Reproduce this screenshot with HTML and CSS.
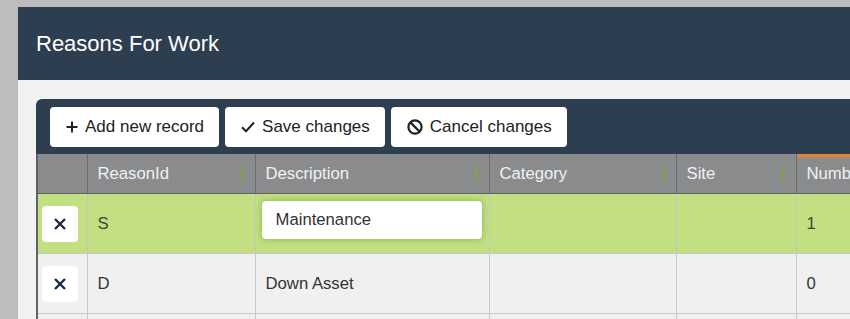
FILE: index.html
```html
<!DOCTYPE html>
<html lang="en">
<head>
  <meta charset="UTF-8" />
  <meta name="viewport" content="width=device-width, initial-scale=1.0"/>
  <title>Reasons For Work</title>
  <link rel="stylesheet" href="styles.css">
</head>
<body>
  <div class="panel">
    <div class="panel-header">Reasons For Work</div>
    <div class="panel-body">
      <div class="grid">
        <div class="toolbar">
          <button class="tool-btn">
            <svg width="12" height="12" viewBox="0 0 12 12"><path d="M6 0.5v11M0.5 6h11" stroke="#222" stroke-width="2" fill="none"/></svg>
            Add new record
          </button>
          <button class="tool-btn">
            <svg width="14" height="12" viewBox="0 0 14 12"><path d="M1 6.2l4 4L13 1.5" stroke="#222" stroke-width="2" fill="none"/></svg>
            Save changes
          </button>
          <button class="tool-btn">
            <svg width="16" height="16" viewBox="0 0 16 16"><circle cx="8" cy="8" r="6.6" stroke="#222" stroke-width="2.2" fill="none"/><path d="M3.4 3.4l9.2 9.2" stroke="#222" stroke-width="2.2"/></svg>
            Cancel changes
          </button>
        </div>
        <table class="data">
          <colgroup>
            <col style="width:50px">
            <col style="width:168px">
            <col style="width:234px">
            <col style="width:187px">
            <col style="width:120px">
            <col style="width:200px">
          </colgroup>
          <thead>
            <tr>
              <th></th>
              <th><div class="th-in">ReasonId <svg class="kebab" width="4" height="18" viewBox="0 0 4 18"><circle cx="2" cy="2" r="1.6"/><circle cx="2" cy="9" r="1.6"/><circle cx="2" cy="16" r="1.6"/></svg></div></th>
              <th><div class="th-in">Description <svg class="kebab" width="4" height="18" viewBox="0 0 4 18"><circle cx="2" cy="2" r="1.6"/><circle cx="2" cy="9" r="1.6"/><circle cx="2" cy="16" r="1.6"/></svg></div></th>
              <th><div class="th-in">Category <svg class="kebab" width="4" height="18" viewBox="0 0 4 18"><circle cx="2" cy="2" r="1.6"/><circle cx="2" cy="9" r="1.6"/><circle cx="2" cy="16" r="1.6"/></svg></div></th>
              <th><div class="th-in">Site <svg class="kebab" width="4" height="18" viewBox="0 0 4 18"><circle cx="2" cy="2" r="1.6"/><circle cx="2" cy="9" r="1.6"/><circle cx="2" cy="16" r="1.6"/></svg></div></th>
              <th class="sorted"><div class="th-in">Number</div></th>
            </tr>
          </thead>
          <tbody>
            <tr class="editing">
              <td class="cmd"><button class="del-btn"><svg width="12" height="12" viewBox="0 0 12 12"><path d="M1 1l10 10M11 1L1 11" stroke="#1d2a3a" stroke-width="2.4"/></svg></button></td>
              <td>S</td>
              <td class="edit-cell"><div class="editor">Maintenance</div></td>
              <td></td>
              <td></td>
              <td>1</td>
            </tr>
            <tr>
              <td class="cmd"><button class="del-btn"><svg width="12" height="12" viewBox="0 0 12 12"><path d="M1 1l10 10M11 1L1 11" stroke="#1d2a3a" stroke-width="2.4"/></svg></button></td>
              <td>D</td>
              <td>Down Asset</td>
              <td></td>
              <td></td>
              <td>0</td>
            </tr>
            <tr>
              <td class="cmd"></td>
              <td></td>
              <td></td>
              <td></td>
              <td></td>
              <td></td>
            </tr>
          </tbody>
        </table>
      </div>
    </div>
  </div>
</body>
</html>
```
FILE: styles.css
```css
body {
  margin: 0;
  padding: 7px 0 0 18px;
  background: #bdbdbd;
  font-family: "Liberation Sans", Arial, sans-serif;
  overflow: hidden;
  height: 319px;
  box-sizing: border-box;
}
.panel {
  width: 900px;
  background: #f2f2f2;
  min-height: 400px;
}
.panel-header {
  height: 73px;
  background: #2d3e50;
  color: #fff;
  font-size: 22px;
  display: flex;
  align-items: center;
  padding-left: 18px;
}
.panel-body {
  padding: 19px 0 0 18px;
}
.grid {
  background: #2c3e50;
  border-radius: 6px 0 0 0;
  overflow: hidden;
}
.toolbar {
  display: flex;
  gap: 6px;
  padding: 8px 14px 7px;
}
.tool-btn {
  display: flex;
  align-items: center;
  gap: 7px;
  height: 40px;
  padding: 0 15px 0 16px;
  border: none;
  border-radius: 4px;
  background: #fff;
  color: #222;
  font-family: "Liberation Sans", Arial, sans-serif;
  font-size: 17px;
}
.data {
  border-collapse: collapse;
  table-layout: fixed;
  width: 959px;
  border-left: 2px solid #5f6367;
  font-size: 16.7px;
}
.data th {
  height: 39px;
  background: #8a8b8d;
  color: #f1f1f1;
  font-weight: normal;
  text-align: left;
  padding: 0 0 0 10px;
  border-right: 1px solid #6a6b6d;
  border-bottom: 1px solid #606163;
}
.th-in {
  display: flex;
  align-items: center;
  justify-content: space-between;
  padding-right: 11px;
}
.kebab {
  fill: #7ab317;
}
.data th.sorted {
  background: linear-gradient(#e5832a 0, #e5832a 2px, #b88a60 3px, #8a8b8d 5px);
}
.data td {
  height: 59px;
  padding: 0 0 0 10px;
  color: #333;
  background: #f0f0f0;
  border-right: 1px solid #c8c8c8;
  border-bottom: 1px solid #c8c8c8;
}
.data tr.editing td {
  background: #c2df81;
  color: #3b4a38;
}
.data td.cmd {
  padding-left: 4px;
}
.del-btn {
  display: flex;
  align-items: center;
  justify-content: center;
  width: 36px;
  height: 36px;
  border: none;
  border-radius: 4px;
  background: #fff;
  padding: 0;
}
.data td.edit-cell {
  height: 52px;
  vertical-align: top;
  padding: 7px 7px 0 6px;
}
.editor {
  height: 38px;
  line-height: 38px;
  padding-left: 14px;
  background: #fff;
  border-radius: 4px;
  color: #333;
  box-shadow: 0 0 6px rgba(110, 165, 50, 0.75);
}
```
